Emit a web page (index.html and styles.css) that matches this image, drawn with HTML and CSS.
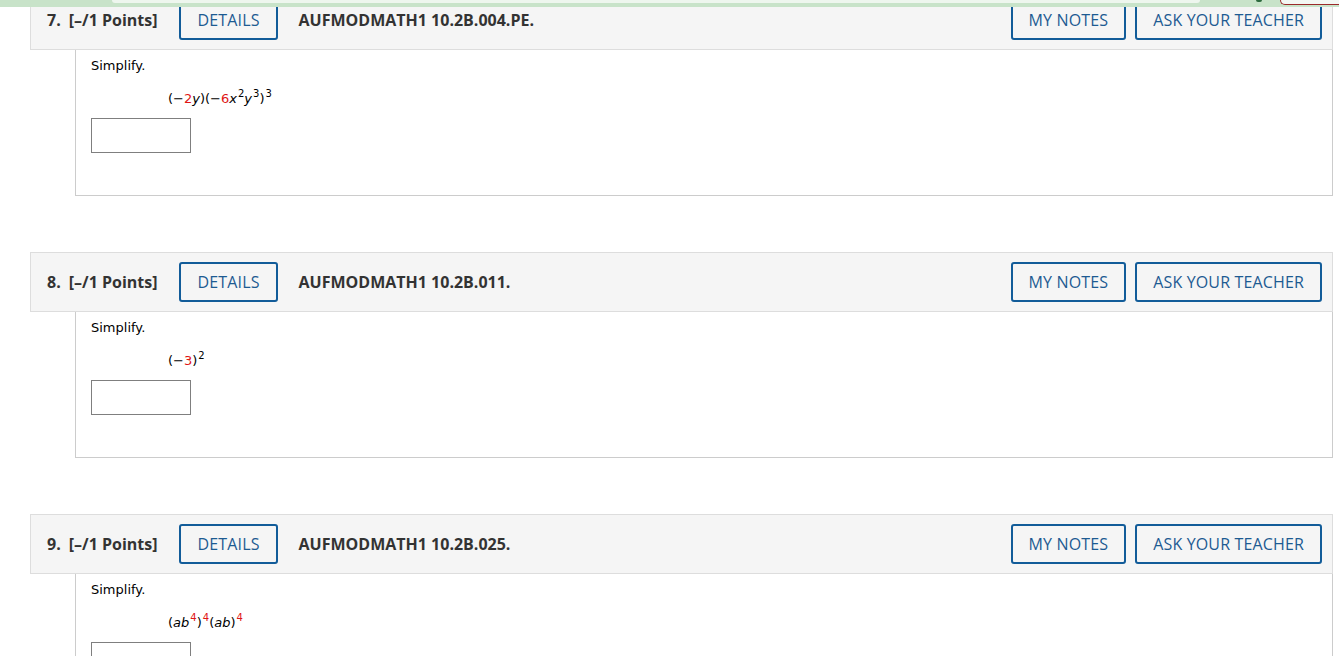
FILE: index.html
```html
<!DOCTYPE html>
<html lang="en">
<head>
<meta charset="utf-8">
<title>Assignment</title>
<link rel="stylesheet" href="styles.css">
</head>
<body>
<div class="topstrip">
  <div class="strip-tab"></div>
  <div class="strip-dot"></div>
  <div class="strip-pill"></div>
</div>
<main class="page">
  <section class="question">
    <div class="q-header">
      <span class="q-num">7.</span>
      <span class="q-points">[–/1 Points]</span>
      <button class="btn btn-details">DETAILS</button>
      <span class="q-title">AUFMODMATH1 10.2B.004.PE.</span>
      <span class="spacer"></span>
      <div class="actions">
        <button class="btn">MY NOTES</button>
        <button class="btn">ASK YOUR TEACHER</button>
      </div>
    </div>
    <div class="q-body">
      <p class="prompt">Simplify.</p>
      <div class="math">(−<span class="red">2</span><i>y</i>)(−<span class="red">6</span><i>x</i><sup>2</sup><i>y</i><sup>3</sup>)<sup>3</sup></div>
      <input class="answer" type="text">
    </div>
  </section>
  <section class="question">
    <div class="q-header">
      <span class="q-num">8.</span>
      <span class="q-points">[–/1 Points]</span>
      <button class="btn btn-details">DETAILS</button>
      <span class="q-title">AUFMODMATH1 10.2B.011.</span>
      <span class="spacer"></span>
      <div class="actions">
        <button class="btn">MY NOTES</button>
        <button class="btn">ASK YOUR TEACHER</button>
      </div>
    </div>
    <div class="q-body">
      <p class="prompt">Simplify.</p>
      <div class="math">(−<span class="red">3</span>)<sup>2</sup></div>
      <input class="answer" type="text">
    </div>
  </section>
  <section class="question">
    <div class="q-header">
      <span class="q-num">9.</span>
      <span class="q-points">[–/1 Points]</span>
      <button class="btn btn-details">DETAILS</button>
      <span class="q-title">AUFMODMATH1 10.2B.025.</span>
      <span class="spacer"></span>
      <div class="actions">
        <button class="btn">MY NOTES</button>
        <button class="btn">ASK YOUR TEACHER</button>
      </div>
    </div>
    <div class="q-body">
      <p class="prompt">Simplify.</p>
      <div class="math">(<i>ab</i><sup class="red">4</sup>)<sup class="red">4</sup>(<i>ab</i>)<sup class="red">4</sup></div>
      <input class="answer" type="text">
    </div>
  </section>
</main>
</body>
</html>
```
FILE: styles.css
```css
html, body {
  margin: 0;
  padding: 0;
  background: #ffffff;
}
body {
  overflow: hidden;
  font-family: "Open Sans", "Liberation Sans", sans-serif;
  color: #333333;
}
.topstrip {
  position: fixed;
  top: 0;
  left: 0;
  right: 0;
  height: 7px;
  background: #c8e3c9;
  display: flex;
  align-items: flex-start;
  z-index: 10;
}
.strip-tab {
  margin-left: 112px;
  width: 1088px;
  height: 3px;
  background: #eef6ee;
  border-radius: 0 0 8px 8px;
}
.strip-dot {
  margin-left: 56px;
  width: 6px;
  height: 2px;
  background: #2d6a3e;
  border-radius: 0 0 3px 3px;
}
.strip-pill {
  margin-left: 18px;
  flex: 1;
  height: 4px;
  border: 1px solid #9b2a2a;
  border-top: none;
  border-right: none;
  border-radius: 0 0 0 8px;
  background: #f3f7f3;
}
.page {
  margin-top: -10px;
  padding: 0 6px 0 30px;
}
.question {
  margin-bottom: 56px;
}
.q-header {
  display: flex;
  align-items: center;
  height: 58px;
  background: #f5f5f5;
  border: 1px solid #dddddd;
  padding: 0 10px 0 16px;
  font-size: 16px;
  font-weight: 700;
  color: #333333;
}
.q-num {
  margin-right: 8px;
}
.q-points {
  margin-right: 22px;
}
.q-title {
  margin-left: 21px;
}
.spacer {
  flex: 1;
}
.actions {
  display: flex;
  gap: 9px;
}
.btn {
  font-family: "Open Sans", "Liberation Sans", sans-serif;
  font-size: 16px;
  font-weight: 500;
  letter-spacing: 0.15px;
  color: #1d5b92;
  background: transparent;
  border: 2px solid #125c99;
  border-radius: 3px;
  height: 40px;
  padding: 0 16px;
  margin: 0;
  cursor: pointer;
}
.q-body {
  margin-left: 45px;
  height: 137px;
  border: 1px solid #cccccc;
  border-top: none;
  padding: 8px 15px 0 15px;
  font-family: "DejaVu Sans", Verdana, sans-serif;
  font-size: 13px;
  color: #000000;
}
.prompt {
  margin: 0;
  line-height: 16px;
}
.math {
  margin: 14px 0 0 77px;
  line-height: 22px;
  height: 22px;
}
.math sup {
  font-size: 10px;
  line-height: 0;
  vertical-align: 6px;
  padding-left: 1px;
}
.math i {
  font-style: italic;
}
.red {
  color: #e01515;
}
.answer {
  display: block;
  margin-top: 8px;
  box-sizing: border-box;
  width: 100px;
  height: 35px;
  border: 1px solid #7f7f7f;
  border-radius: 0;
  padding: 0 4px;
  background: #ffffff;
  font-family: "DejaVu Sans", sans-serif;
  font-size: 13px;
}
```
